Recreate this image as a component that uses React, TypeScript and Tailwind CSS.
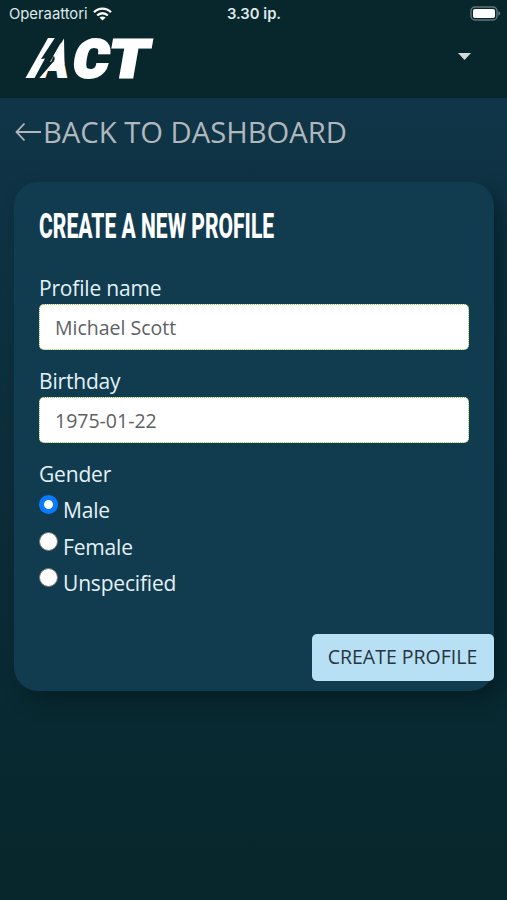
import { useState } from "react";

interface FieldProps {
  label: string;
  value: string;
  onChange: (value: string) => void;
}

const genders = ["Male", "Female", "Unspecified"];

const StatusBar = () => (
  <div className="flex h-7 items-center justify-between pl-[9px] pr-[8px] font-['Inter',sans-serif] text-[#dfe7ea]">
    <div className="flex w-[160px] items-center gap-[5px]">
      <span className="text-[14.8px] leading-7">Operaattori</span>
      <svg width="19" height="14" viewBox="0 0 19 14" fill="none" stroke="#fff" strokeWidth="2.3">
        <path d="M1 5.2C5.8.3 13.2.3 18 5.2" />
        <path d="M4.2 8.5c3-3 7.6-3 10.6 0" />
        <path d="M9.5 13.6 6.4 10.5c1.8-1.5 4.4-1.5 6.2 0z" fill="#fff" stroke="none" />
      </svg>
    </div>
    <span className="-ml-[2px] text-[14.8px] font-semibold leading-7">3.30 ip.</span>
    <div className="-mr-[2px] flex w-[160px] justify-end">
      <svg width="31" height="15" viewBox="0 0 31 15" className="-mt-[2px]">
        <rect x="1" y="1" width="26" height="13" rx="4" fill="none" stroke="#60777a" strokeWidth="1.4" />
        <rect x="3" y="3" width="22" height="9" rx="2" fill="#fff" />
        <path d="M28.3 5.3v4.4q2-.6 2-2.2t-2-2.2z" fill="#60777a" />
      </svg>
    </div>
  </div>
);

const Logo = () => (
  <svg width="132" height="60" viewBox="0 0 132 60" className="overflow-visible font-['Roboto',sans-serif]" fill="#fff">
    <g fontWeight="900" fontSize="52" stroke="#fff" strokeWidth="2">
      <text transform="translate(13 49) skewX(-6)" textLength="29" lengthAdjust="spacingAndGlyphs">A</text>
      <text transform="translate(47 49) skewX(-10)" strokeWidth="3" textLength="35" lengthAdjust="spacingAndGlyphs">C</text>
      <text transform="translate(83 49) skewX(-10)" strokeWidth="3" textLength="39" lengthAdjust="spacingAndGlyphs">T</text>
    </g>
    {/* lightning bolt running through the first letter */}
    <path d="M24 10H31.500L14 50H1.500z" />
    <path d="M31.500 9 17 31l4-.5L10 51h4.500L30 33l-4 1L39.500 10z" fill="#07272d" />
    <path d="M40 10.500 29 28.500l3.500-.5-4 8h12z" />
  </svg>
);

const Field = ({ label, value, onChange }: FieldProps) => (
  <label className="mb-[15px] block">
    <span className="block h-[32px] text-[21px] leading-[32px] tracking-[-0.18px]">{label}</span>
    <input
      className="block h-[46px] w-full rounded-[5px] border border-dotted border-[#8dc63f] bg-white px-[15px] text-[19.500px] text-[#5d6165] outline-none"
      value={value}
      onChange={(e) => onChange(e.target.value)}
    />
  </label>
);

export default function App() {
  const [name, setName] = useState("Michael Scott");
  const [birthday, setBirthday] = useState("1975-01-22");
  const [gender, setGender] = useState("Male");

  return (
    <div className="h-[900px] w-full overflow-hidden bg-linear-to-b from-[#103548] from-10% to-[#07272d] to-95% font-['Open_Sans',sans-serif]">
      <header className="h-[98px] bg-[#07272d]">
        <StatusBar />
        <div className="flex items-start justify-between pl-[24px] pr-[36px]">
          <Logo />
          <svg width="13" height="7" viewBox="0 0 13 7" className="mt-[25px]">
            <path d="M0 0h13L6.5 7z" fill="#d3dadd" />
          </svg>
        </div>
      </header>

      <a className="flex h-[68px] items-center pl-[15px] text-[29.2px] text-[#b0b8bd]">
        <svg width="27" height="20" viewBox="0 0 27 20" fill="none" stroke="currentColor" strokeWidth="1.8">
          <path d="M26 10H1.5M9.500 1.500 1.500 10l8 8.500" />
        </svg>
        <span className="ml-[1px] mt-[1px] whitespace-nowrap">BACK TO DASHBOARD</span>
      </a>

      <main className="mr-[13px] ml-[14px] mt-[16px] flex h-[509px] flex-col rounded-[24px] bg-[#113c4f] text-[#e3f1f7] shadow-[10px_10px_20px_rgba(0,20,25,0.5)]">
        <div className="px-[25px] pt-[22px]">
          <h1 className="h-[68px] origin-left scale-x-[0.602] whitespace-nowrap font-['Roboto',sans-serif] text-[35px] font-extrabold leading-[45px] text-white">
            CREATE A NEW PROFILE
          </h1>
          <Field label="Profile name" value={name} onChange={setName} />
          <Field label="Birthday" value={birthday} onChange={setBirthday} />
          <div className="h-[32px] text-[21px] leading-[32px] tracking-[-0.18px]">Gender</div>
          {genders.map((option) => (
            <label key={option} className="flex h-[36.700px] items-start">
              <input
                type="radio"
                name="gender"
                checked={gender === option}
                onChange={() => setGender(option)}
                className="mt-[5px] size-[19px] appearance-none rounded-full border border-[#777] bg-white checked:border-[5.500px] checked:border-[#087bfe]"
              />
              <span className="ml-[5px] text-[21px] leading-[41px] tracking-[-0.18px]">{option}</span>
            </label>
          ))}
        </div>
        <button className="mb-[10px] ml-auto mt-auto h-[47px] w-[182px] whitespace-nowrap rounded-[5px] bg-[#b8e0f4] pb-[1px] pr-[7px] pl-[6px] text-[19.500px] text-[#27343d]">
          CREATE PROFILE
        </button>
      </main>
    </div>
  );
}
